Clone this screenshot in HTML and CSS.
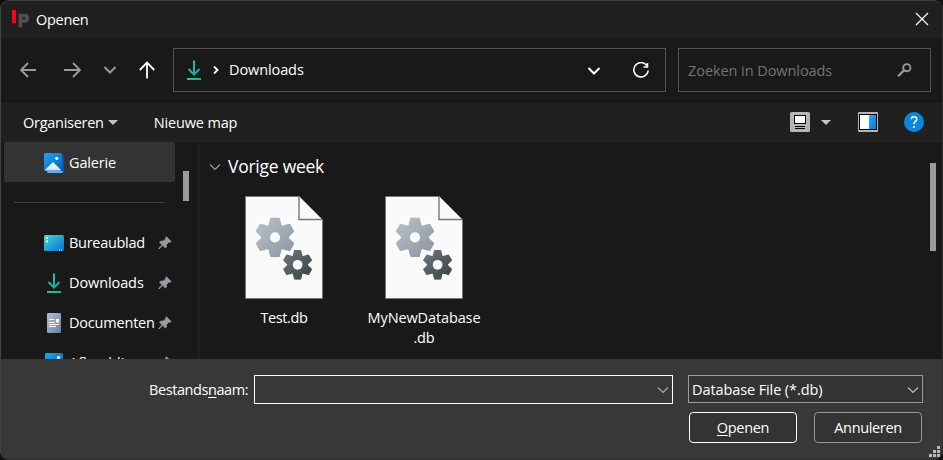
FILE: index.html
```html
<!DOCTYPE html>
<html lang="nl">
<head>
<meta charset="utf-8">
<title>Openen</title>
<link rel="stylesheet" href="styles.css">
</head>
<body>
<svg class="defs" width="0" height="0" aria-hidden="true">
  <defs>
    <linearGradient id="green" x1="0" y1="0" x2="1" y2="1"><stop offset="0" stop-color="#35d08c"/><stop offset="1" stop-color="#10a3a0"/></linearGradient>
    <linearGradient id="arrow" gradientUnits="userSpaceOnUse" x1="0" y1="0" x2="6" y2="16"><stop offset="0" stop-color="#2fd08a"/><stop offset="1" stop-color="#12a9b0"/></linearGradient>
    <linearGradient id="blue" x1="0" y1="0" x2="1" y2="1"><stop offset="0" stop-color="#1ea4ea"/><stop offset="1" stop-color="#0562bd"/></linearGradient>
    <linearGradient id="pane" x1="0" y1="0" x2="1" y2="1"><stop offset="0" stop-color="#2ab0ea"/><stop offset="1" stop-color="#0877d4"/></linearGradient>
    <linearGradient id="desk" x1="0" y1="0" x2="1" y2="1"><stop offset="0" stop-color="#3cdbe0"/><stop offset="1" stop-color="#0c6dc8"/></linearGradient>
    <linearGradient id="paper" x1="0" y1="0" x2="1" y2="1"><stop offset="0" stop-color="#b3c0d3"/><stop offset="1" stop-color="#6481a6"/></linearGradient>
    <linearGradient id="snow" x1="0" y1="0" x2="0" y2="1"><stop offset="0" stop-color="#fff"/><stop offset="1" stop-color="#c8e4f8"/></linearGradient>
    <linearGradient id="light" x1="0" y1="0" x2="1" y2="1"><stop offset="0" stop-color="#b9c3cb"/><stop offset="1" stop-color="#8b949c"/></linearGradient>
    <linearGradient id="dark" x1="0" y1="0" x2="1" y2="1"><stop offset="0" stop-color="#6f7b80"/><stop offset="1" stop-color="#393e41"/></linearGradient>
    <mask id="gear" maskUnits="userSpaceOnUse" x="-21" y="-21" width="42" height="42">
      <g fill="#fff" stroke="#fff" stroke-width="2" stroke-linejoin="round">
        <circle r="12.6"/>
        <path id="tooth" d="M-3.8-18.8H3.8L5.8-11V11L3.8 18.8H-3.8L-5.8 11V-11Z"/>
        <use href="#tooth" transform="rotate(60)"/>
        <use href="#tooth" transform="rotate(120)"/>
      </g>
      <circle r="5.1" fill="#000"/>
    </mask>
    <symbol id="file" viewBox="0 0 78 103">
      <path d="M.5.5H54.5L77.5 23.5V102.5H.5Z" fill="#fafafa" stroke="#777" />
      <path d="M54 .5V23.5H77.5" fill="none" stroke="#777" stroke-width="1.4"/>
      <g transform="translate(30 41.4)"><rect x="-20" y="-20" width="40" height="40" fill="url(#light)" mask="url(#gear)"/></g>
      <g transform="translate(52.6 68.8) scale(.75)"><rect x="-20" y="-20" width="40" height="40" fill="url(#dark)" mask="url(#gear)"/><circle r="6.5" fill="#fafafa"/></g>
    </symbol>
    <symbol id="pin" viewBox="0 0 14 14"><path d="M8.5.7 13.3 5.5 12.4 6.3 10.8 6.2 8.6 8.5 8.4 11.3 7.3 12.1 4.6 9.4 1.2 13 .5 12.8 1 12 3.9 8.7 1.4 6.2 2.3 5.2 5.4 5 7.6 2.8 7.5 1.6Z" fill="#969ca4" stroke="#969ca4" stroke-width=".5"/></symbol>
    <symbol id="download" viewBox="0 0 14 20"><path d="M7 .5V14M1.5 9 7 14.6 12.5 9" fill="none" stroke="url(#arrow)" stroke-width="2"/><path d="M0 18H14V20H0Z" fill="url(#green)"/></symbol>
    <symbol id="gallery" viewBox="0 0 20 20"><rect x="3" y="2" width="17" height="18" rx="1.5" fill="#0d57a8"/><path d="M3 18H19Q19 20 17 20H5Q3 20 3 18Z" fill="#72a8df"/><rect width="18" height="18" rx="1.5" fill="url(#blue)"/><path d="M1 17 9 9 17 17Q16.5 17.6 15.5 17.6H2.5Q1.5 17.6 1 17Z" fill="url(#snow)"/><circle cx="12.8" cy="5.3" r="1.6" fill="#fff"/></symbol>
    <symbol id="chevron" viewBox="0 0 12 8"><path d="M1 1.5 6 6.5 11 1.5" fill="none" stroke="currentColor" stroke-width="1.2"/></symbol>
    <symbol id="chevron-bold" viewBox="0 0 14 10"><path d="M1.5 2 7 7.5 12.5 2" fill="none" stroke="currentColor" stroke-width="2"/></symbol>
  </defs>
</svg>

<div class="dialog">
  <header class="titlebar">
    <svg class="logo" width="18" height="18" viewBox="0 0 18 18"><path d="M0 0H4V13H0Z" fill="#fd0021"/><path d="M7 4H12.5Q17 4 17 8.2T12.5 12.5H10V17H7ZM10 7V9.5H12.3Q13.8 9.5 13.8 8.2T12.3 7Z" fill="#505050" stroke="#505050" stroke-width=".6" fill-rule="evenodd"/></svg>
    <h1 class="title">Openen</h1>
    <svg class="close" width="14" height="14" viewBox="0 0 14 14"><path d="M1 1 13 13M13 1 1 13" stroke="#fff" stroke-width="1.2"/></svg>
  </header>

  <nav class="navbar">
    <div class="nav-buttons">
      <svg class="muted" width="17" height="16" viewBox="0 0 17 16"><path d="M16 8H1.5M8 1 1 8 8 15" fill="none" stroke="currentColor" stroke-width="1.9"/></svg>
      <svg class="muted forward" width="17" height="16" viewBox="0 0 17 16"><path d="M0 8H15M9 1 16 8 9 15" fill="none" stroke="currentColor" stroke-width="1.9"/></svg>
      <svg class="muted recent" width="14" height="10"><use href="#chevron-bold"/></svg>
      <svg class="up" width="16" height="18" viewBox="0 0 16 18"><path d="M8 17.5V2M.8 9 8 1.6 15.2 9" fill="none" stroke="#fff" stroke-width="1.8"/></svg>
    </div>
    <div class="address">
      <svg width="14" height="20"><use href="#download"/></svg>
      <svg class="crumb" width="6" height="8" viewBox="0 0 6 8"><path d="M1 .5 4.6 4 1 7.5" fill="none" stroke="#fff" stroke-width="1.8"/></svg>
      <span class="path">Downloads</span>
      <svg class="history" width="14" height="10"><use href="#chevron-bold"/></svg>
      <svg class="refresh" width="18" height="18" viewBox="0 0 18 18"><path d="M14.8 3.5A7.2 7.2 0 1 0 16.2 8.5M15.5 1V5H11.5" fill="none" stroke="#fff" stroke-width="1.5"/></svg>
    </div>
    <div class="search">
      <span class="placeholder">Zoeken in Downloads</span>
      <svg width="15" height="14" viewBox="0 0 15 14"><circle cx="9.8" cy="4.7" r="3.6" fill="none" stroke="#999" stroke-width="1.9"/><path d="M7 7.4 1 13.2" stroke="#999" stroke-width="2.2"/></svg>
    </div>
  </nav>

  <div class="toolbar">
    <span class="organise">Organiseren</span>
    <i class="caret"></i>
    <span class="newfolder">Nieuwe map</span>
    <svg class="view" width="20" height="20" viewBox="0 0 20 20"><rect width="20" height="20" rx="1.5" fill="#b5b5b5"/><rect x="4.5" y="3.5" width="11" height="8" fill="#fff" stroke="#000"/><path d="M5 14.5H15M5 16.5H15" stroke="#000"/></svg>
    <i class="caret view-caret"></i>
    <svg class="preview" width="20" height="20" viewBox="0 0 20 20"><rect width="20" height="20" rx="1" fill="#b5b5b5"/><rect x="1.5" y="2.5" width="17" height="15" fill="#fff" stroke="#000"/><path d="M11 3H18V17H11Z" fill="url(#pane)"/></svg>
    <svg width="20" height="20" viewBox="0 0 20 20"><circle cx="10" cy="10" r="10" fill="#0b87dc"/><path d="M7.3 7.3Q7.3 4.7 10 4.7T12.7 7.2Q12.7 8.6 11.3 9.5T10 12.3" fill="none" stroke="#fff" stroke-width="1.5"/><circle cx="10" cy="15" r="1.1" fill="#fff"/></svg>
  </div>

  <main class="content">
    <aside class="sidebar">
      <div class="places">
        <div class="place selected"><svg width="20" height="20"><use href="#gallery"/></svg><span class="galerie">Galerie</span></div>
        <hr>
        <div class="place"><svg width="20" height="16" viewBox="0 0 20 16"><rect width="20" height="16" rx="1.5" fill="url(#desk)"/><path d="M2 2H4V4H2ZM2 5.5H4V7.5H2ZM15 14.5H16V15.5H15ZM17 14.5H18V15.5H17Z" fill="#fff"/></svg><span class="bureaublad">Bureaublad</span><svg class="pin" width="14" height="14"><use href="#pin"/></svg></div>
        <div class="place"><svg width="20" height="20" viewBox="-3 0 20 20"><path d="M7 .5V14M1.5 9 7 14.6 12.5 9" fill="none" stroke="url(#arrow)" stroke-width="2"/><path d="M0 18H14V20H0Z" fill="url(#green)"/></svg><span class="downloads">Downloads</span><svg class="pin" width="14" height="14"><use href="#pin"/></svg></div>
        <div class="place"><svg width="20" height="20" viewBox="-3 0 20 20"><rect width="14" height="20" rx="1.3" fill="url(#paper)"/><path d="M2 6.5H7.5M2 9.5H7.5M2 11.5H12M2 13.5H9" stroke="#fff" stroke-width="1.1"/><path d="M9 6H12V9.5H9Z" fill="#fff"/></svg><span class="documenten">Documenten</span><svg class="pin" width="14" height="14"><use href="#pin"/></svg></div>
        <div class="place"><svg width="20" height="20" viewBox="-1 0 20 20"><rect width="18" height="19" rx="1.5" fill="url(#blue)"/><path d="M1 18 9 10 17 18Z" fill="#fff"/><circle cx="13.5" cy="4.6" r="1.6" fill="#fff"/></svg><span class="afbeeldingen">Afbeeldingen</span><svg class="pin" width="14" height="14"><use href="#pin"/></svg></div>
      </div>
      <div class="thumb"></div>
    </aside>
    <section class="files">
      <h2 class="group"><svg width="12" height="8"><use href="#chevron"/></svg><span class="week">Vorige week</span></h2>
      <div class="grid">
        <div class="file"><svg width="78" height="103"><use href="#file"/></svg><span class="test">Test.db</span></div>
        <div class="file"><svg width="78" height="103"><use href="#file"/></svg><span class="mydb">MyNewDatabase<br>.db</span></div>
      </div>
    </section>
    <div class="main-thumb"></div>
  </main>

  <footer class="footer">
    <div class="fields">
      <label class="label">Bestands<u>n</u>aam:</label>
      <div class="name-input"><svg width="12" height="8"><use href="#chevron"/></svg></div>
      <div class="type-select"><span class="dbtype">Database File (*.db)</span><svg width="12" height="8"><use href="#chevron"/></svg></div>
    </div>
    <div class="actions">
      <button class="btn primary"><span class="title"><u>O</u>penen</span></button>
      <button class="btn"><span class="annuleren">Annuleren</span></button>
    </div>
    <svg class="grip" width="11" height="11" viewBox="0 0 11 11"><path d="M8 0H11V3H8ZM4 4H7V7H4ZM8 4H11V7H8ZM0 8H3V11H0ZM4 8H7V11H4ZM8 8H11V11H8Z" fill="#bbb"/></svg>
  </footer>
</div>
</body>
</html>
```
FILE: styles.css
```css
* { box-sizing: border-box; }
body {
  margin: 0;
  background: #101010;
  color: #fff;
  font: 14.5px/20px "Open Sans", "Noto Sans", sans-serif;
}
svg { flex: none; display: block; }
span, label { white-space: nowrap; }
h1, h2 { margin: 0; font-weight: 400; }
u { text-decoration-thickness: 1px; text-underline-offset: 2px; }
.defs { position: absolute; }
.dialog {
  position: relative;
  width: 943px;
  height: 460px;
  display: flex;
  flex-direction: column;
  overflow: hidden;
  border-radius: 9px;
  background: #191919;
}
.dialog::after {
  content: "";
  position: absolute;
  inset: 0;
  border: 1px solid #434343;
  border-right-color: #303030;
  border-bottom-color: #303030;
  border-radius: 9px;
  pointer-events: none;
}
.titlebar { height: 38px; flex: none; display: flex; align-items: center; padding: 0 15px 0 12px; background: #202020; }
.titlebar .title { font-size: 14.5px; margin: 2px auto 0 6px; }
.title { letter-spacing: -.3px; }
.close { margin-right: -1px; }

.navbar { height: 65px; flex: none; display: flex; align-items: center; padding: 0 12px 2px 20px; }
.nav-buttons { width: 153px; display: flex; align-items: center; }
.muted { color: #9a9a9a; }
.forward { margin-left: 27px; }
.recent { margin-left: 22px; }
.up { margin-left: 22px; }
.address { width: 493px; height: 44px; border: 1px solid #535353; display: flex; align-items: center; padding: 0 15px 0 13px; }
.crumb { margin-left: 12px; }
.path { margin: 0 auto 0 10px; letter-spacing: -.1px; }
.history { margin: 2px 31px 0 0; color: #fff; }
.refresh { margin-top: 2px; }
.search { width: 253px; height: 44px; margin-left: 12px; border: 1px solid #535353; display: flex; align-items: center; justify-content: space-between; padding: 0 18px 0 9px; color: #747474; }
.placeholder { letter-spacing: -.07px; padding-top: 2px; }

.toolbar { height: 38px; flex: none; display: flex; align-items: center; padding: 0 19px 0 23px; background: #202020; }
.organise { letter-spacing: -.27px; padding-top: 1px; }
.caret { border: 5px solid transparent; border-top-color: #c4c4c4; border-bottom: 0; margin-left: 4px; }
.newfolder { margin: 1px auto 0 36px; letter-spacing: -.15px; }
.view-caret { margin: 0 27px 0 11px; }
.preview { margin-right: 26px; }

.content { height: 218px; flex: none; display: flex; overflow: hidden; border-top: 1px solid #252525; }
.sidebar { width: 200px; height: 217px; padding-left: 4px; display: flex; border-right: 2px solid #202020; overflow: hidden; }
.places { width: 171px; flex: none; }
.place { height: 40px; display: flex; align-items: center; padding: 1px 3px 0 40px; }
.place span { margin: 1px 0 0 5px; }
.place .pin { margin-left: auto; }
.galerie { letter-spacing: -.15px; }
.bureaublad { letter-spacing: -.3px; }
.downloads { letter-spacing: -.1px; }
.documenten { letter-spacing: -.2px; }
.selected { background: #333; border-radius: 2px; }
hr { height: 1px; border: 0; margin: 20px 10px 19px; background: #3b3b3b; }
.thumb { width: 6px; height: 30px; margin: 29px 0 0 8px; background: #9a9a9a; }
.files { width: 730px; padding: 15px 0 0 9px; }
.group { display: flex; align-items: center; color: #999; font-size: 17.5px; }
.week { color: #fff; margin: -1px 0 1px 7px; letter-spacing: -.25px; }
.grid { display: flex; margin: 19px 0 0 5px; }
.file { width: 140px; display: flex; flex-direction: column; align-items: center; text-align: center; }
.file span { margin-top: 9px; }
.test { letter-spacing: -.4px; }
.mydb { letter-spacing: -.12px; }
.main-thumb { width: 6px; height: 88px; margin-top: 21px; background: #9a9a9a; }

.footer { position: relative; height: 101px; background: #383838; padding: 16px 20px 0 149px; }
.fields { display: flex; height: 29px; }
.label { width: 105px; line-height: 29px; letter-spacing: -.42px; }
.name-input { width: 419px; border: 1px solid #fff; display: flex; align-items: center; justify-content: flex-end; padding-right: 3px; color: #aaa; }
.type-select { width: 235px; height: 28px; margin-left: 15px; border: 1px solid #9b9b9b; background: #333; display: flex; align-items: center; justify-content: space-between; padding: 1px 3px 0; color: #bbb; }
.dbtype { color: #fff; letter-spacing: -.1px; }
.actions { display: flex; justify-content: flex-end; gap: 17px; margin: 8px 1px 0 0; }
.btn { width: 108px; height: 31px; padding: 0; border: 1px solid #989898; border-radius: 4px; background: #333; color: #fff; font: inherit; }
.primary { border-color: #fff; }
.annuleren { letter-spacing: -.35px; }
.grip { position: absolute; right: 3px; bottom: 3px; }
```
